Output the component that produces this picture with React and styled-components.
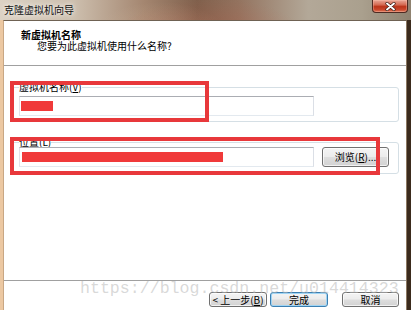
import React from "react";
import styled, { createGlobalStyle } from "styled-components";

const Global = createGlobalStyle`
  html, body { margin: 0; padding: 0; background: #fff; }
  body { width: 411px; height: 310px; overflow: hidden; }
  * { box-sizing: border-box; }
`;

const FONT = `"Noto Sans CJK SC", "Liberation Sans", sans-serif`;

const Window = styled.div`
  position: relative;
  width: 411px;
  height: 310px;
  overflow: hidden;
  display: flex;
  flex-direction: column;
  font-family: ${FONT};
  font-size: 10px;
  color: #000;
  background: linear-gradient(90deg, #dcd2c4 0%, #cdbfae 18%, #a48670 35%, #7f604c 48%, #93735f 58%, #b3a898 75%, #aaa08e 88%, #8f8270 100%);
`;

const TitleBar = styled.div`
  position: relative;
  height: 20px;
  flex: none;
  display: flex;
  align-items: flex-start;
  justify-content: space-between;
  background:
    radial-gradient(ellipse 140px 60px at 210px 40px, rgba(190, 90, 70, 0.35), transparent 70%),
    radial-gradient(ellipse 90px 40px at 160px 30px, rgba(230, 200, 170, 0.25), transparent 70%);
`;

const Title = styled.span`
  margin: 4px 0 0 4px;
  line-height: 11px;
  font-size: 10px;
  color: #111;
  text-shadow: 0 0 4px rgba(255, 255, 255, 0.9), 0 0 8px rgba(255, 255, 255, 0.6);
`;

const CloseButton = styled.div`
  width: 36px;
  height: 13px;
  margin-right: 3px;
  display: flex;
  align-items: center;
  justify-content: center;
  border: 1px solid #4e2a22;
  border-top: none;
  border-radius: 0 0 4px 4px;
  background: linear-gradient(180deg, #e9a898 0%, #d46a52 40%, #bb3419 55%, #c9472c 80%, #e07a5c 100%);
  box-shadow: inset 0 0 0 1px rgba(255, 200, 180, 0.35);
`;

const Frame = styled.div`
  flex: 1;
  display: flex;
  border-left: 3px solid #ecc8a2;
  border-right: 4px solid #3b2b1d;
`;

const Content = styled.div`
  position: relative;
  flex: 1;
  display: flex;
  flex-direction: column;
  background: #fff;
  border-top: 1px solid #6f6253;
  border-left: 1px solid #c9a784;
  border-right: 1px solid #8c7862;
`;

const Header = styled.div`
  height: 45px;
  flex: none;
  padding: 8px 0 0 17px;
  border-bottom: 1px solid #a0a0a0;
  background: #fff;
`;

const HeaderTitle = styled.div`
  font-weight: bold;
  line-height: 11px;
  font-size: 10px;
`;

const HeaderSub = styled.div`
  line-height: 11px;
  padding-left: 16px;
`;

const Body = styled.div`
  position: relative;
  flex: 1;
  display: flex;
  flex-direction: column;
  padding: 15px 7px 0 7px;
  gap: 15px;
  border-top: 1px solid #fff;
`;

const Group = styled.fieldset`
  margin: 0;
  padding: ${(p) => p.$top}px 7px ${(p) => p.$bottom}px 7px;
  border: 1px solid #d5dfe5;
  border-radius: 3px;
  min-width: 0;
`;

const Legend = styled.legend`
  padding: 0;
  margin-left: 0;
  line-height: 10px;
  font-size: 10px;
  color: #000;
`;

const Row = styled.div`
  display: flex;
  align-items: center;
  gap: 8px;
`;

const TextBox = styled.div`
  width: 295px;
  height: 20px;
  display: flex;
  align-items: center;
  padding-left: ${(p) => p.$pad}px;
  border: 1px solid;
  border-color: #abadb3 #dbdfe6 #e3e9ef #e2e3ea;
  background: #fff;
`;

const Redact = styled.div`
  height: 10px;
  background: #f03a3a;
`;

const Button = styled.button`
  font-family: ${FONT};
  font-size: 10px;
  line-height: 10px;
  color: #000;
  width: ${(p) => p.$w}px;
  height: ${(p) => p.$h}px;
  padding: 0;
  border: 1px solid ${(p) => (p.$default ? "#3c7fb1" : "#707070")};
  border-radius: 3px;
  background: linear-gradient(180deg, #f4f4f4 0%, #ececec 48%, #dedede 52%, #d2d2d2 100%);
  box-shadow: inset 0 0 0 1px ${(p) => (p.$default ? "#9fd5f5" : "rgba(255,255,255,0.7)")};
  display: flex;
  align-items: center;
  justify-content: center;
  flex: none;
`;

const Footer = styled.div`
  height: 30px;
  flex: none;
  border-top: 1px solid #a0a0a0;
  display: flex;
  justify-content: flex-end;
  align-items: flex-start;
  padding: 11px 7px 0 0;
  gap: 3px;
`;

const Spacer = styled.div`
  width: 8px;
`;

const Highlight = styled.div`
  position: absolute;
  border: 4px solid #e8383b;
  pointer-events: none;
`;

const Watermark = styled.div`
  position: absolute;
  left: 80px;
  top: 280px;
  font-family: "Liberation Mono", "DejaVu Sans Mono", monospace;
  font-size: 16.6px;
  line-height: 17px;
  color: rgba(185, 185, 185, 0.55);
  white-space: nowrap;
  pointer-events: none;
`;

const CloseIcon = () => (
  <svg width="11" height="9" viewBox="0 0 11 9">
    <path d="M2 1.5 L9 7.5 M9 1.5 L2 7.5" stroke="#3a1a12" strokeWidth="3.2" strokeLinecap="round" />
    <path d="M2 1.5 L9 7.5 M9 1.5 L2 7.5" stroke="#fff" strokeWidth="1.9" strokeLinecap="round" />
  </svg>
);

export default function App() {
  return (
    <>
      <Global />
      <Window>
        <TitleBar>
          <Title>克隆虚拟机向导</Title>
          <CloseButton>
            <CloseIcon />
          </CloseButton>
        </TitleBar>
        <Frame>
          <Content>
            <Header>
              <HeaderTitle>新虚拟机名称</HeaderTitle>
              <HeaderSub>您要为此虚拟机使用什么名称?</HeaderSub>
            </Header>
            <Body>
              <Group $top={4} $bottom={5}>
                <Legend>
                  虚拟机名称(<u>V</u>)
                </Legend>
                <Row>
                  <TextBox $pad={1}>
                    <Redact style={{ width: 32 }} />
                  </TextBox>
                </Row>
              </Group>
              <Group $top={0} $bottom={6}>
                <Legend>
                  位置(<u>L</u>)
                </Legend>
                <Row>
                  <TextBox $pad={2}>
                    <Redact style={{ width: 201 }} />
                  </TextBox>
                  <Button $w={67} $h={20}>
                    浏览(<u>R</u>)...
                  </Button>
                </Row>
              </Group>
              <Highlight style={{ left: 6, top: 14, width: 199, height: 41 }} />
              <Highlight style={{ left: 6, top: 70, width: 370, height: 38 }} />
            </Body>
            <Footer>
              <Button $w={58} $h={15}>
                &lt; 上一步(<u>B</u>)
              </Button>
              <Button $w={58} $h={15} $default>
                完成
              </Button>
              <Spacer />
              <Button $w={57} $h={15}>
                取消
              </Button>
            </Footer>
          </Content>
        </Frame>
        <Watermark>https://blog.csdn.net/u014414323</Watermark>
      </Window>
    </>
  );
}
